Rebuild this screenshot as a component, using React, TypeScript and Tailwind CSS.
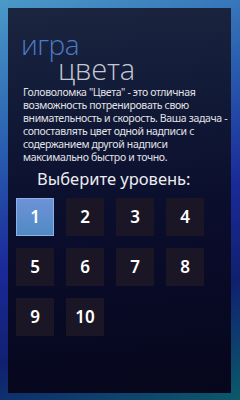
import React from "react";

export default function App() {
  const levels = [1, 2, 3, 4, 5, 6, 7, 8, 9, 10];
  return (
    <div className="w-[240px] h-[400px] p-[8px] pb-[7px] bg-[linear-gradient(160deg,#4a9ac8_0%,#2a5fb0_30%,#1a2a9a_55%,#102070_75%,#0b5a6a_100%)] overflow-hidden">
      <div className="h-full w-[223px] bg-[linear-gradient(175deg,#1c2540_0%,#111a36_25%,#0a0d2c_55%,#06061c_100%)] flex flex-col" style={{ fontFamily: '"Noto Sans", "Open Sans", sans-serif' }}>
        <div className="pl-[13px] pt-[25px]" style={{ fontFamily: '"Open Sans", "Noto Sans", sans-serif' }}>
          <div className="text-[28px] leading-[22px] font-light text-[#4a7cc6] h-[22px] tracking-[-0.5px]">игра</div>
          <div className="text-[29px] leading-[28px] font-light text-[#c4c8d2] pl-[37px] h-[28px] tracking-[-0.2px]">цвета</div>
        </div>
        <p className="mt-[3px] pl-[15px] pr-[3px] text-[10.5px] leading-[13px] tracking-[-0.35px] text-[#e2e2e8]">
          Головоломка "Цвета" - это отличная возможность потренировать свою внимательность и скорость. Ваша задача - сопоставлять цвет одной надписи с содержанием другой надписи максимально быстро и точно.
        </p>
        <div className="mt-[4px] pl-[29px] text-[16.5px] leading-[22px] text-[#ececf0]">Выберите уровень:</div>
        <div className="mt-[8px] pl-[8px] grid grid-cols-[repeat(4,38px)] auto-rows-[38px] gap-x-[12px] gap-y-[12px]">
          {levels.map((n) => (
            <div
              key={n}
              className={
                n === 1
                  ? "flex items-center justify-center bg-[linear-gradient(180deg,#6e92d6_0%,#4f8ac4_100%)] border border-[#8cb0e8] text-white text-[17px] font-semibold"
                  : "flex items-center justify-center bg-[#1a1626] text-white text-[17px] font-semibold"
              }
            >
              {n}
            </div>
          ))}
        </div>
      </div>
    </div>
  );
}
